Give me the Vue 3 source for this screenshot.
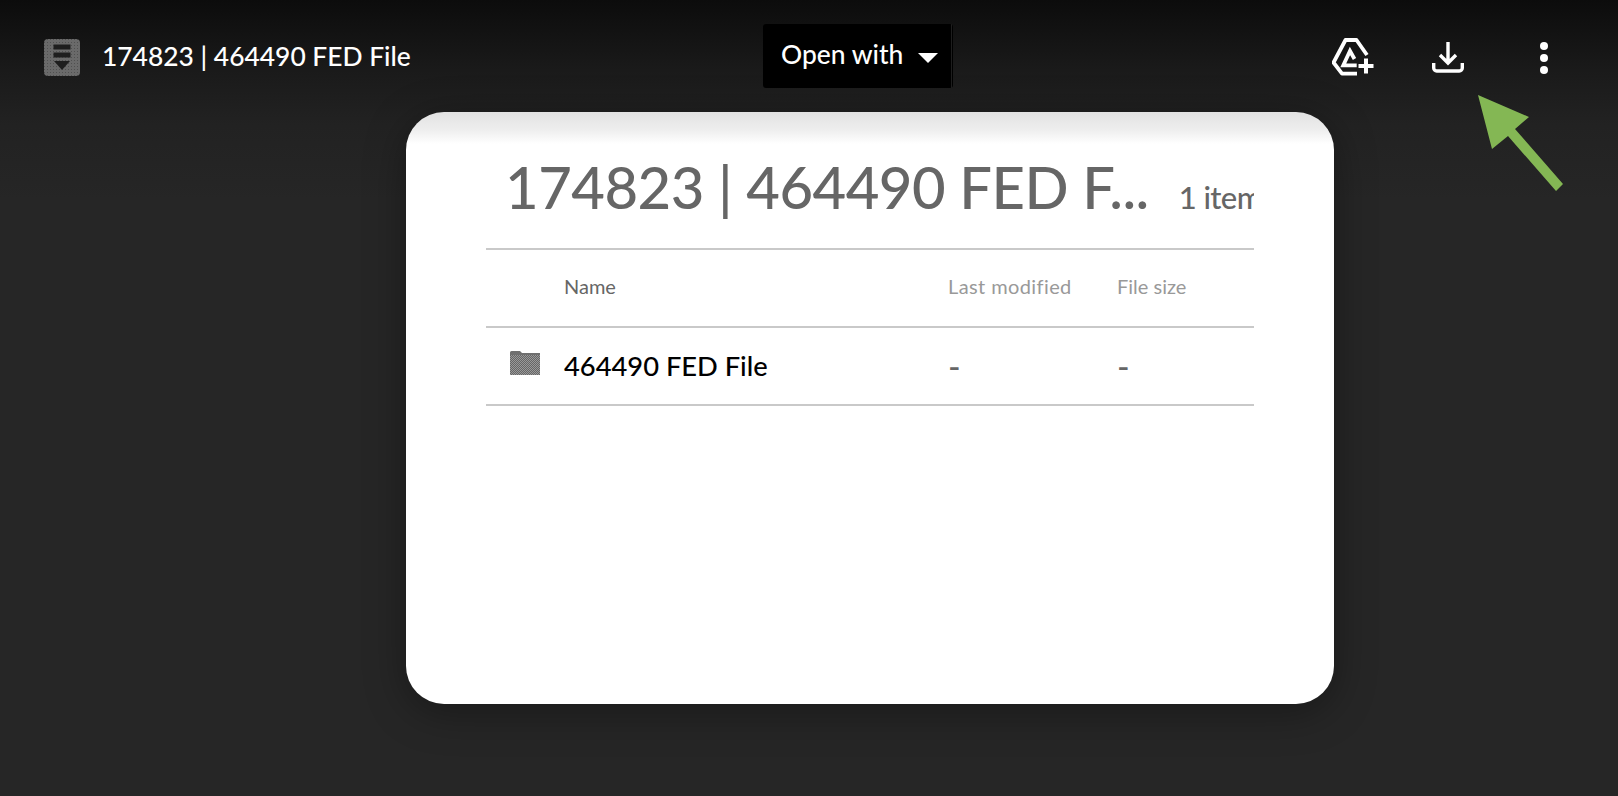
<script setup>
const rows = [{ name: '464490 FED File', modified: '-', size: '-' }]
</script>

<template>
  <div class="page">
    <header class="bar">
      <div class="file">
        <svg class="file-icon" viewBox="0 0 36 37" aria-hidden="true">
          <defs>
            <pattern id="dither" width="3" height="3" patternUnits="userSpaceOnUse">
              <rect width="3" height="3" fill="#6a6a6a" />
              <rect width="1" height="1" fill="#505050" />
            </pattern>
          </defs>
          <rect width="36" height="37" rx="4" fill="url(#dither)" />
          <rect x="9.5" y="5.5" width="17" height="5" fill="#1e1e1e" />
          <rect x="9.5" y="13.5" width="17" height="5" fill="#1e1e1e" />
          <path d="M10 22h16l-8 9z" fill="#1e1e1e" />
        </svg>
        <span class="file-name">174823 | 464490 FED File</span>
      </div>
      <button class="open">
        <span>Open with</span>
        <i class="caret"></i>
      </button>
      <div class="actions">
        <svg class="add" viewBox="0 0 42 38" aria-hidden="true">
          <path d="M25 35.700H10L1.500 24.500 13.500 2h11L35 17" fill="none" stroke="#fff" stroke-width="3.800" stroke-linejoin="round" stroke-linecap="butt" />
          <path d="M24.700 27.300H11.300L18 13l4.500 8" fill="none" stroke="#fff" stroke-width="3.800" stroke-linejoin="miter" />
          <path d="M34 20.500v15M26.500 28h15" fill="none" stroke="#fff" stroke-width="4" />
        </svg>
        <svg class="download" viewBox="0 0 32 31" aria-hidden="true">
          <path d="M16 0v20M8 13l8 8 8-8" fill="none" stroke="#fff" stroke-width="3.400" />
          <path d="M1.700 21v5a3 3 0 0 0 3 3h22.600a3 3 0 0 0 3-3v-5" fill="none" stroke="#fff" stroke-width="3.400" />
        </svg>
        <div class="dots"><i></i><i></i><i></i></div>
      </div>
    </header>

    <main class="stage">
      <section class="card">
        <div class="listing">
          <div class="title-row">
            <h1>174823 | 464490 FED F...</h1>
            <span class="count">1 item</span>
          </div>
          <div class="row head">
            <span class="c-name">Name</span>
            <span class="c-mod muted">Last modified</span>
            <span class="c-size muted">File size</span>
          </div>
          <div v-for="r in rows" :key="r.name" class="row item">
            <svg class="folder" viewBox="0 0 30 24" aria-hidden="true">
              <defs>
                <pattern id="folderdither" width="2" height="2" patternUnits="userSpaceOnUse">
                  <rect width="2" height="2" fill="#999" />
                  <rect width="1" height="1" fill="#666" />
                  <rect x="1" y="1" width="1" height="1" fill="#666" />
                </pattern>
              </defs>
              <path d="M0 1.500A1.500 1.500 0 0 1 1.500 0H10l2 2h18v22H0z" fill="#6f6f6f" />
              <rect y="4" width="30" height="20" fill="url(#folderdither)" />
            </svg>
            <span class="c-name strong">{{ r.name }}</span>
            <span class="c-mod dash">{{ r.modified }}</span>
            <span class="c-size dash">{{ r.size }}</span>
          </div>
        </div>
      </section>
    </main>

    <svg class="arrow" viewBox="0 0 90 100" aria-hidden="true">
      <path d="M2 0 53 22 39 34 87 89 80 96 32 41 16 54z" fill="#84b754" />
    </svg>
  </div>
</template>

<style>
html, body { margin: 0; background: #262626; }
</style>

<style scoped>
.page {
  position: relative;
  width: 1618px;
  height: 796px;
  overflow: hidden;
  font-family: Lato, "Noto Sans", sans-serif;
  background: linear-gradient(#0c0c0c 0, #1a1a1a 70px, #222 125px, #262626 200px);
}
.bar {
  height: 112px;
  box-sizing: border-box;
  display: flex;
  align-items: flex-start;
}
.file {
  width: 763px;
  box-sizing: border-box;
  padding: 39px 0 0 44px;
  display: flex;
  align-items: center;
  gap: 22px;
}
.file-icon { width: 36px; height: 37px; flex: none; }
.file-name { color: #fff; font-size: 26.400px; font-weight: 500; white-space: nowrap; margin-top: -4px; }
.open {
  margin-top: 24px;
  width: 190px;
  height: 64px;
  box-sizing: border-box;
  padding: 0 0 4px 18px;
  display: flex;
  align-items: center;
  gap: 15px;
  background: linear-gradient(to right, #000 188px, #1e1e1e 188px, #1e1e1e 189px, #000 189px);
  border: 0;
  border-radius: 3px;
  color: #fff;
  font: inherit;
  font-size: 26.400px;
  font-weight: 500;
}
.caret {
  width: 0;
  height: 0;
  border-left: 10px solid transparent;
  border-right: 10px solid transparent;
  border-top: 10px solid #fff;
  margin-top: 8px;
}
.actions {
  flex: 1;
  position: relative;
  display: flex;
  align-items: flex-start;
  padding: 38px 0 0 379px;
}
.add { width: 42px; height: 38px; flex: none; }
.download { width: 32px; height: 31px; flex: none; margin: 4px 0 0 58px; }
.dots {
  margin: 4px 0 0 76px;
  display: flex;
  flex-direction: column;
  gap: 4px;
}
.dots i { width: 8px; height: 8px; border-radius: 50%; background: #fff; }

.stage { padding-left: 406px; }
.card {
  width: 928px;
  height: 592px;
  box-sizing: border-box;
  padding: 0 80px;
  border-radius: 38px;
  background: linear-gradient(#e2e2e2 0, #eeeeee 18px, #fff 32px);
  box-shadow: 0 8px 40px rgba(0, 0, 0, 0.35);
}
.listing { width: 768px; overflow: hidden; }
.title-row {
  height: 138px;
  box-sizing: border-box;
  display: flex;
  align-items: baseline;
  padding: 40px 0 0 19px;
  border-bottom: 2px solid #c9c9c9;
  white-space: nowrap;
  color: #666;
}
h1 { margin: 0; font-size: 58px; font-weight: 500; letter-spacing: -0.5px; }
.count { margin-left: 30px; font-size: 31px; font-weight: 500; letter-spacing: -0.6px; }
.row {
  height: 78px;
  box-sizing: border-box;
  display: flex;
  align-items: center;
  border-bottom: 2px solid #c9c9c9;
  position: relative;
}
.c-name { position: absolute; left: 78px; }
.c-mod { position: absolute; left: 462px; }
.c-size { position: absolute; left: 631px; }
.head { font-size: 20px; color: #666; padding-bottom: 4px; }
.head .c-mod { letter-spacing: 0.4px; }
.item { padding-bottom: 2px; }
.muted { color: #999; }
.strong { font-size: 27.300px; font-weight: 500; color: #000; }
.dash { font-size: 34px; color: #666; }
.folder { width: 30px; height: 24px; margin: -5px 0 0 24px; }
.arrow { position: absolute; left: 1476px; top: 95px; width: 90px; height: 100px; }
</style>
